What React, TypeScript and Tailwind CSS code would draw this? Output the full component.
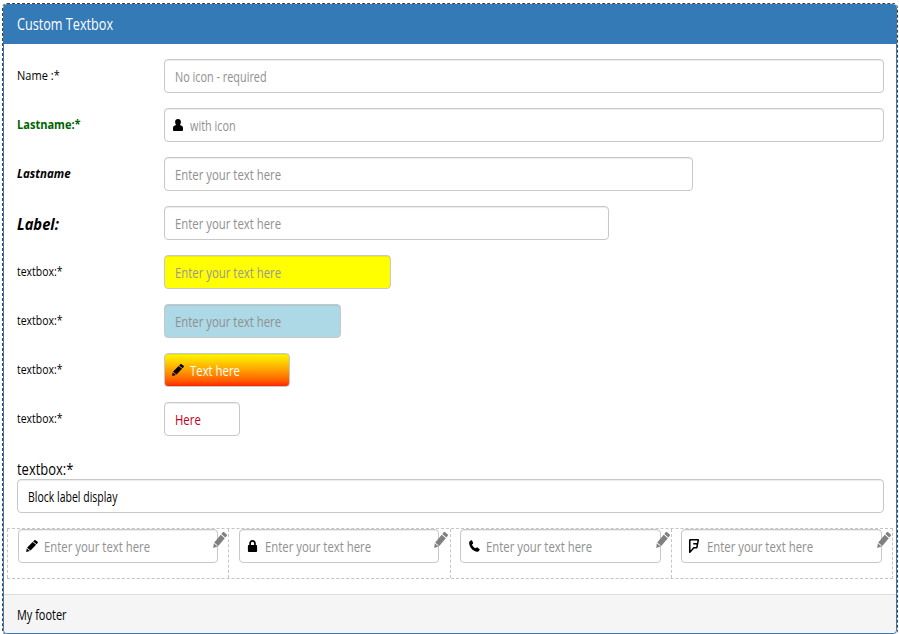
import type { ReactNode } from "react";
import { FaFoursquare } from "react-icons/fa";

/* ---------- Icons ---------- */
function UserIcon() {
  return (
    <svg viewBox="0 0 12 12" className="w-3 h-3" fill="currentColor">
      <path d="M6 0C4.100 0 3.100 1.300 3.100 3.100c0 1.300.4 2.300 1 3C2.400 6.500 1 7.300 1 9v1.700c0 .8.4 1.300 1.200 1.300h7.600c.8 0 1.200-.5 1.200-1.300V9c0-1.700-1.400-2.500-3.100-2.900.6-.7 1-1.700 1-3C8.900 1.300 7.900 0 6 0z" />
    </svg>
  );
}

function PencilIcon({ className = "w-3 h-3" }: { className?: string }) {
  return (
    <svg viewBox="0 0 14 16" className={className} fill="currentColor" preserveAspectRatio="none">
      <path d="M9.500.5c.5-.6 1.100-.6 1.700-.2l2.300 2c.6.5.6 1.100.1 1.700l-1.200 1.500-4.100-3.500zM7.700 2.700l4.100 3.500-6.500 7.700-4.100-3.500zM.8 11.200l3.800 3.300L.2 16z" />
    </svg>
  );
}

function LockIcon() {
  return (
    <svg viewBox="0 0 12 12" className="w-3 h-3" fill="currentColor">
      <path d="M2.200 5V3.700C2.200 1.400 3.600 0 5.500 0s3.300 1.400 3.300 3.700V5h.4c.6 0 .9.3.9.900V11c0 .6-.3 1-.9 1H1.800c-.6 0-.9-.4-.9-1V5.900c0-.6.3-.9.900-.9zm1.700 0h3.200V3.700c0-1.200-.6-2-1.600-2s-1.600.8-1.600 2z" />
    </svg>
  );
}

function PhoneIcon() {
  return (
    <svg viewBox="0 0 12 12" className="w-3 h-3" fill="currentColor">
      <path d="M1.600 1.400 3 .3c.4-.3.8-.2 1 .2l1.100 2.200c.2.4.1.8-.2 1l-.9.7c.5 1.500 2 3.200 3.600 3.900l.9-.7c.3-.2.700-.2 1 0l1.900 1.500c.4.3.4.7.1 1.100l-1.200 1.300c-.3.3-.7.400-1.100.3C5 11.200 1.200 7.200 1.100 2.400c0-.4.2-.8.5-1z" />
    </svg>
  );
}

/* Condensed text, squeezed from its left edge */
function Text({ children, className = "scale-x-[0.757]" }: { children: ReactNode; className?: string }) {
  return <span className={`inline-block origin-left whitespace-nowrap ${className}`}>{children}</span>;
}

interface TextboxProps {
  text: string;
  icon?: ReactNode;
  className?: string;
  textClass?: string;
}

function Textbox({ text, icon, className = "", textClass }: TextboxProps) {
  return (
    <div
      className={`flex items-center h-[34px] rounded border border-[#c8c8c8] shadow-[inset_0_1px_1px_rgba(0,0,0,0.075)] text-[15px] leading-5 overflow-hidden ${
        icon ? "pl-[7px]" : "pl-[10px]"
      } ${className}`}
    >
      {icon && <span className="w-[18px] shrink-0 text-black">{icon}</span>}
      <Text className={textClass}>{text}</Text>
    </div>
  );
}

function Row({ label, labelClass = "text-[12px]", textClass = "scale-x-[0.87]", children }: {
  label: string;
  labelClass?: string;
  textClass?: string;
  children: ReactNode;
}) {
  return (
    <div className="flex h-[34px] mb-[15px]">
      <div className={`w-[147.5px] shrink-0 h-[33px] flex items-center ${labelClass}`}>
        <Text className={textClass}>{label}</Text>
      </div>
      {children}
    </div>
  );
}

const columns = [
  { name: "pencil", icon: <PencilIcon /> },
  { name: "lock", icon: <LockIcon /> },
  { name: "phone", icon: <PhoneIcon /> },
  { name: "foursquare", icon: <FaFoursquare className="w-[14px] h-[14px] -ml-[2px]" /> },
];

export default function App() {
  return (
    <div className="h-[634px] bg-white pt-1 pl-[3px] overflow-hidden font-['Open_Sans','Noto_Sans',sans-serif] text-black">
      <div className="w-[894px] h-[630px] flex flex-col rounded border border-[#337ab7] outline-1 outline-dashed outline-[#444]">
        <header className="h-[39px] shrink-0 bg-[#337ab7] text-white text-[17px] pl-[12.5px] pb-[2px] flex items-center">
          <Text className="scale-x-[0.744]">Custom Textbox</Text>
        </header>

        <main className="pt-[15px] grow">
          <div className="pl-[12.5px] pr-[12px]">
            <Row label="Name :*" textClass="scale-x-[0.92]">
              <Textbox text="No icon - required" textClass="scale-x-[0.724]" className="grow bg-white text-[#909090]" />
            </Row>
            <Row label="Lastname:*" labelClass="text-[12px] font-bold text-[#006400]" textClass="scale-x-[0.92]">
              <Textbox
                text="with icon"
                icon={<UserIcon />}
                textClass="scale-x-[0.724]"
                className="grow bg-white text-[#909090]"
              />
            </Row>
            <Row label="Lastname" labelClass="text-[12px] font-bold italic" textClass="scale-x-[0.96]">
              <Textbox text="Enter your text here" className="w-[529px] bg-white text-[#909090]" />
            </Row>
            <Row label="Label:" labelClass="text-[16px] font-bold italic pt-[3px]" textClass="scale-x-[0.92]">
              <Textbox text="Enter your text here" className="w-[445px] bg-white text-[#909090]" />
            </Row>
            <Row label="textbox:*">
              <Textbox text="Enter your text here" className="w-[227px] bg-[#ff0] text-[#999]" />
            </Row>
            <Row label="textbox:*">
              <Textbox text="Enter your text here" className="w-[176.5px] bg-[#add8e6] text-[#909090]" />
            </Row>
            <Row label="textbox:*">
              <Textbox
                text="Text here"
                icon={<PencilIcon />}
                className="w-[126px] bg-linear-to-b bg-origin-border from-[#ff0] to-[#f00] text-white"
              />
            </Row>
            <Row label="textbox:*">
              <Textbox text="Here" className="w-[75.5px] bg-white text-[#c00020]" />
            </Row>

            <div className="h-[28px] text-[16px] leading-[20px] pt-[8px]">
              <Text className="scale-x-[0.81]">textbox:*</Text>
            </div>
            <Textbox text="Block label display" textClass="scale-x-[0.7]" className="bg-white text-black" />
          </div>

          <div className="mt-[15px] ml-[3px] w-[886px] h-[51px] grid grid-cols-4 border border-l-0 border-dashed border-[#c4c4c4]">
            {columns.map((col) => (
              <div key={col.name} className="relative pl-[9.5px] border-l border-dashed border-[#c4c4c4]">
                <Textbox text="Enter your text here" icon={col.icon} className="w-[200.5px] bg-white text-[#909090]" />
                <span className="absolute left-[205px] top-[3px] text-[#808080]">
                  <PencilIcon className="w-[14px] h-[16px]" />
                </span>
              </div>
            ))}
          </div>
        </main>

        <footer className="h-[39px] shrink-0 bg-[#f5f5f5] border-t border-[#ddd] rounded-b pl-[12.5px] flex items-center text-[15px]">
          <Text className="scale-x-[0.73]">My footer</Text>
        </footer>
      </div>
    </div>
  );
}
